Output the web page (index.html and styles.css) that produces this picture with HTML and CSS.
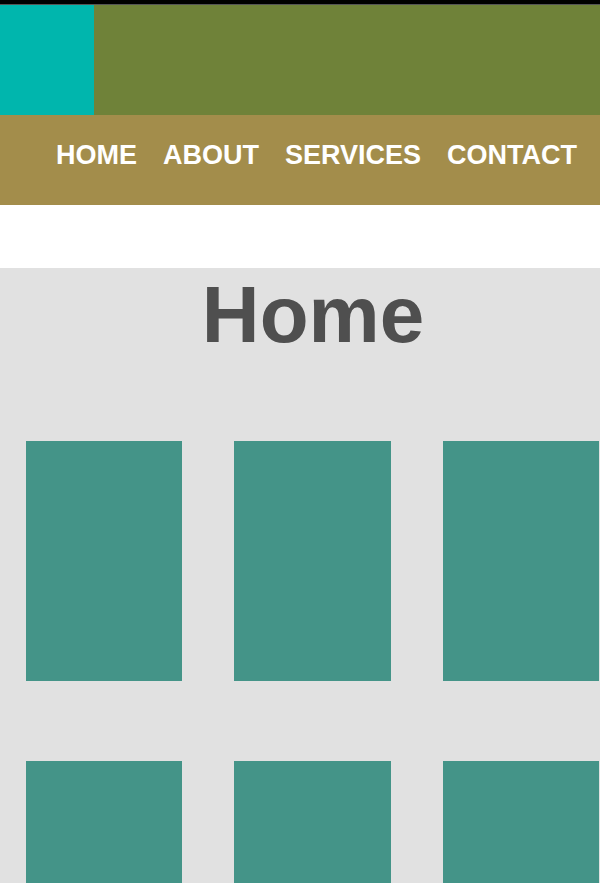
FILE: index.html
```html
<!DOCTYPE html>
<html>
<head>
<meta charset="utf-8">
<link rel="stylesheet" href="styles.css">
</head>
<body>
<div class="topbar"></div>
<header class="header">
  <div class="logo"></div>
  <div class="banner"></div>
</header>
<nav class="nav">
  <a class="nav-link" href="#">HOME</a>
  <a class="nav-link" href="#">ABOUT</a>
  <a class="nav-link" href="#">SERVICES</a>
  <a class="nav-link" href="#">CONTACT</a>
</nav>
<main class="content">
  <h1 class="title">Home</h1>
  <div class="grid">
    <div class="card"></div>
    <div class="card"></div>
    <div class="card"></div>
    <div class="card"></div>
    <div class="card"></div>
    <div class="card"></div>
  </div>
</main>
</body>
</html>
```
FILE: styles.css
```css
html, body {
  margin: 0;
  padding: 0;
  background: #ffffff;
  font-family: "Liberation Sans", Arial, sans-serif;
}
body {
  height: 883px;
  overflow: hidden;
}
.topbar {
  height: 4px;
  background: #000000;
  border-bottom: 1px solid #555555;
}
.header {
  display: flex;
  height: 110px;
}
.logo {
  width: 94px;
  background: #00b6ad;
}
.banner {
  flex: 1;
  background: #6f8239;
}
.nav {
  display: flex;
  justify-content: flex-end;
  align-items: center;
  gap: 26px;
  height: 90px;
  padding: 0 23px 10px 0;
  box-sizing: border-box;
  background: #a38d4b;
}
.nav-link {
  color: #ffffff;
  text-decoration: none;
  font-weight: bold;
  font-size: 27px;
}
.content {
  margin-top: 63px;
  background: #e1e1e1;
  padding: 1px 0 0 26px;
  min-height: 700px;
}
.title {
  margin: 0;
  text-align: center;
  font-size: 80px;
  font-weight: bold;
  line-height: normal;
  color: #4f4f4f;
}
.grid {
  display: grid;
  grid-template-columns: 156px 157px 156px;
  column-gap: 52px;
  row-gap: 80px;
  margin-top: 80px;
}
.card {
  height: 240px;
  background: #449488;
}
```
